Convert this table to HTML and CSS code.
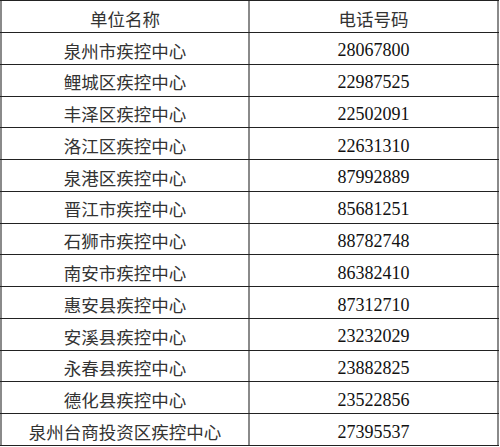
FILE: index.html
```html
<!DOCTYPE html>
<html lang="zh-CN">
<head>
<meta charset="utf-8">
<link rel="stylesheet" href="styles.css">
</head>
<body>
<div class="table">
  <div class="row head"><div class="cell name">单位名称</div><div class="cell name">电话号码</div></div>
  <div class="row"><div class="cell name">泉州市疾控中心</div><div class="cell num">28067800</div></div>
  <div class="row"><div class="cell name">鲤城区疾控中心</div><div class="cell num">22987525</div></div>
  <div class="row"><div class="cell name">丰泽区疾控中心</div><div class="cell num">22502091</div></div>
  <div class="row"><div class="cell name">洛江区疾控中心</div><div class="cell num">22631310</div></div>
  <div class="row"><div class="cell name">泉港区疾控中心</div><div class="cell num">87992889</div></div>
  <div class="row"><div class="cell name">晋江市疾控中心</div><div class="cell num">85681251</div></div>
  <div class="row"><div class="cell name">石狮市疾控中心</div><div class="cell num">88782748</div></div>
  <div class="row"><div class="cell name">南安市疾控中心</div><div class="cell num">86382410</div></div>
  <div class="row"><div class="cell name">惠安县疾控中心</div><div class="cell num">87312710</div></div>
  <div class="row"><div class="cell name">安溪县疾控中心</div><div class="cell num">23232029</div></div>
  <div class="row"><div class="cell name">永春县疾控中心</div><div class="cell num">23882825</div></div>
  <div class="row"><div class="cell name">德化县疾控中心</div><div class="cell num">23522856</div></div>
  <div class="row"><div class="cell name">泉州台商投资区疾控中心</div><div class="cell num">27395537</div></div>
</div>
</body>
</html>
```
FILE: styles.css
```css
html, body {
  margin: 0;
  padding: 0;
  background: #fff;
}
.table {
  width: 499px;
  height: 446px;
  display: grid;
  grid-template-rows: 32px repeat(13, 1fr);
  border-top: 1px solid #222;
  box-sizing: border-box;
}
.row {
  display: grid;
  grid-template-columns: 250px 249px;
  border-bottom: 1px solid #222;
}
.cell {
  display: flex;
  align-items: center;
  justify-content: center;
  padding-top: 4px;
  color: #333;
  font-size: 17.5px;
  line-height: 1;
}
.cell:first-child {
  border-left: 2px solid #8a8a8a;
  border-right: 2px solid #8a8a8a;
}
.cell:last-child {
  border-right: 2px solid #8a8a8a;
}
.name {
  font-family: "Noto Sans CJK SC", "Liberation Sans", sans-serif;
}
.num {
  font-family: "Liberation Serif", "Times New Roman", serif;
  color: #111;
  font-size: 18px;
}
```
